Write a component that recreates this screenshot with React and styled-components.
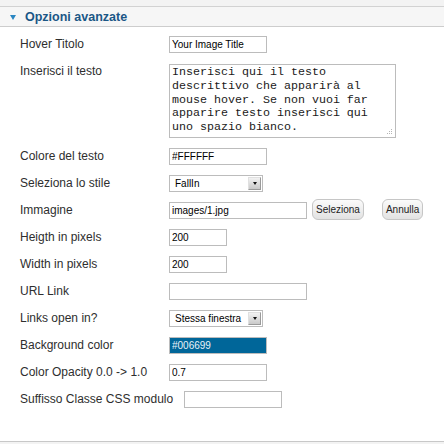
import React from "react";
import styled, { createGlobalStyle } from "styled-components";

const GlobalStyle = createGlobalStyle`
  html, body {
    margin: 0;
    padding: 0;
    background: #ffffff;
  }
  body {
    font-family: "Liberation Sans", Arial, sans-serif;
  }
`;

const Page = styled.div`
  width: 444px;
  height: 444px;
  background: #f3f3f3;
  padding-top: 6px;
  box-sizing: border-box;
  overflow: hidden;
`;

const Panel = styled.div`
  background: #ffffff;
  border-top: 1px solid #d2d2d2;
  border-bottom: 1px solid #c8c8c8;
`;

const Header = styled.div`
  height: 20px;
  background: #f6f6f6;
  border-bottom: 1px solid #cdcdcd;
  display: flex;
  align-items: center;
  gap: 9px;
  padding-left: 10px;
  box-sizing: border-box;
`;

const Arrow = styled.span`
  width: 0;
  height: 0;
  border-left: 3.5px solid transparent;
  border-right: 3.5px solid transparent;
  border-top: 5px solid #2a86c2;
  margin-top: 1px;
`;

const Title = styled.h3`
  margin: 0;
  font-size: 12.5px;
  font-weight: bold;
  color: #1b5786;
`;

const Body = styled.div`
  padding: 4px 0 28px;
`;

const Row = styled.div`
  display: grid;
  grid-template-columns: 149px 1fr;
  align-items: ${(p) => (p.$top ? "start" : "center")};
  padding: ${(p) => (p.$top ? "6px" : "5px")} 0 5px 20px;
`;

const Label = styled.label`
  font-size: 12px;
  line-height: ${(p) => (p.$top ? "14px" : "17px")};
  color: #2e2e2e;
  white-space: nowrap;
`;

const Field = styled.div`
  display: flex;
  align-items: center;
  height: ${(p) => (p.$auto ? "auto" : "17px")};
`;

const Input = styled.input`
  box-sizing: border-box;
  width: ${(p) => p.$w}px;
  height: 17px;
  margin: 0;
  padding: 0 2px;
  border: 1px solid #bcbcbc;
  background: ${(p) => p.$bg || "#ffffff"};
  color: ${(p) => (p.$bg ? "#e8f2f8" : "#000000")};
  font-family: "Liberation Sans", Arial, sans-serif;
  font-size: 10px;
  outline: none;
`;

const AreaWrap = styled.div`
  position: relative;
  width: 227px;
  height: 74px;
`;

const TextArea = styled.textarea`
  box-sizing: border-box;
  width: 227px;
  height: 74px;
  margin: 0;
  padding: 1px 10px 1px 2px;
  border: 1px solid #bcbcbc;
  font-family: "Liberation Mono", "Courier New", monospace;
  font-size: 11.67px;
  line-height: 13.8px;
  color: #1a1a1a;
  resize: none;
  overflow: hidden;
  display: block;
`;

const Grip = styled.svg`
  position: absolute;
  right: 3px;
  bottom: 3px;
`;

const SelectBox = styled.div`
  box-sizing: border-box;
  width: 94px;
  height: 17px;
  border: 1px solid #bcbcbc;
  background: #ffffff;
  display: flex;
  align-items: center;
  justify-content: space-between;
  padding: 0 1px 0 5px;
  font-size: 10px;
  color: #000000;
`;

const SelectArrow = styled.span`
  box-sizing: border-box;
  width: 13px;
  height: 13px;
  background: linear-gradient(#f2f2f2, #c9c9c9);
  border: 1px solid #9a9a9a;
  border-top-color: #e0e0e0;
  border-left-color: #e0e0e0;
  display: flex;
  align-items: center;
  justify-content: center;

  &::after {
    content: "";
    border-left: 2.5px solid transparent;
    border-right: 2.5px solid transparent;
    border-top: 3px solid #111111;
  }
`;

const Button = styled.button`
  height: 21px;
  margin: -2px 0 0 ${(p) => p.$gap}px;
  padding: 0 3px;
  border: 1px solid #c6c6c6;
  border-radius: 6px;
  background: linear-gradient(#fbfbfb, #e2e2e2);
  font-family: "Liberation Sans", Arial, sans-serif;
  font-size: 10px;
  color: #222222;
`;

const InlineRow = styled.div`
  display: flex;
  align-items: center;
  gap: 11px;
  padding: 5px 0 5px 20px;
`;

const Select = ({ value }) => (
  <SelectBox>
    <span>{value}</span>
    <SelectArrow />
  </SelectBox>
);

const testo =
  "Inserisci qui il testo descrittivo che apparirà al mouse hover. Se non vuoi far apparire testo inserisci qui uno spazio bianco.";

export default function App() {
  return (
    <Page>
      <GlobalStyle />
      <Panel>
        <Header>
          <Arrow />
          <Title>Opzioni avanzate</Title>
        </Header>
        <Body>
          <Row>
            <Label>Hover Titolo</Label>
            <Field>
              <Input $w={98} defaultValue="Your Image Title" />
            </Field>
          </Row>
          <Row $top>
            <Label $top>Inserisci il testo</Label>
            <Field $auto>
              <AreaWrap>
                <TextArea defaultValue={testo} />
                <Grip width="6" height="6" viewBox="0 0 6 6">
                  <rect x="4" y="0" width="1" height="1" fill="#b5b5b5" />
                  <rect x="2" y="2" width="1" height="1" fill="#b5b5b5" />
                  <rect x="4" y="2" width="1" height="1" fill="#b5b5b5" />
                  <rect x="0" y="4" width="1" height="1" fill="#b5b5b5" />
                  <rect x="2" y="4" width="1" height="1" fill="#b5b5b5" />
                  <rect x="4" y="4" width="1" height="1" fill="#b5b5b5" />
                </Grip>
              </AreaWrap>
            </Field>
          </Row>
          <Row>
            <Label>Colore del testo</Label>
            <Field>
              <Input $w={98} defaultValue="#FFFFFF" />
            </Field>
          </Row>
          <Row>
            <Label>Seleziona lo stile</Label>
            <Field>
              <Select value="FallIn" />
            </Field>
          </Row>
          <Row>
            <Label>Immagine</Label>
            <Field>
              <Input $w={138} defaultValue="images/1.jpg" />
              <Button $gap={5}>Seleziona</Button>
              <Button $gap={18}>Annulla</Button>
            </Field>
          </Row>
          <Row>
            <Label>Heigth in pixels</Label>
            <Field>
              <Input $w={58} defaultValue="200" />
            </Field>
          </Row>
          <Row>
            <Label>Width in pixels</Label>
            <Field>
              <Input $w={58} defaultValue="200" />
            </Field>
          </Row>
          <Row>
            <Label>URL Link</Label>
            <Field>
              <Input $w={138} defaultValue="" />
            </Field>
          </Row>
          <Row>
            <Label>Links open in?</Label>
            <Field>
              <Select value="Stessa finestra" />
            </Field>
          </Row>
          <Row>
            <Label>Background color</Label>
            <Field>
              <Input $w={98} $bg="#006699" defaultValue="#006699" />
            </Field>
          </Row>
          <Row>
            <Label>Color Opacity 0.0 -&gt; 1.0</Label>
            <Field>
              <Input $w={98} defaultValue="0.7" />
            </Field>
          </Row>
          <InlineRow>
            <Label>Suffisso Classe CSS modulo</Label>
            <Input $w={98} defaultValue="" />
          </InlineRow>
        </Body>
      </Panel>
    </Page>
  );
}
